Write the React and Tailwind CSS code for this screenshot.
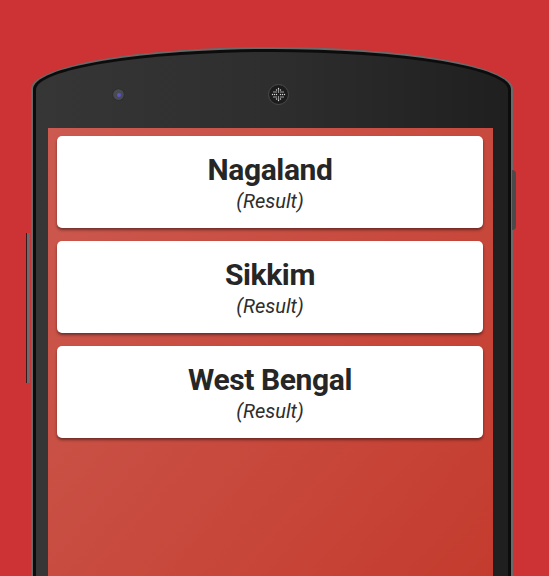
import React from 'react';

const states = ['Nagaland', 'Sikkim', 'West Bengal'];

function ResultCard({ name }) {
  return (
    <div className="h-[92px] bg-white rounded-[5px] shadow-[0_2px_3px_rgba(0,0,0,0.45)] flex flex-col items-center justify-center pt-[3px]">
      <div className="text-[30px] leading-[34px] font-bold tracking-[-0.4px] text-[#262626]">{name}</div>
      <div className="text-[20px] leading-[26px] italic text-[#2e2e2e] mt-[1px]">(Result)</div>
    </div>
  );
}

function App() {
  return (
    <div
      className="relative w-[549px] h-[576px] overflow-hidden bg-[#cd3234]"
      style={{ fontFamily: 'Roboto, "Liberation Sans", sans-serif' }}
    >
      {/* side buttons */}
      <div className="absolute left-[26px] top-[233px] w-[4px] h-[150px] bg-[#6a6a70] border-l border-[#3a1a1a]" />
      <div className="absolute left-[512px] top-[170px] w-[4px] h-[60px] bg-[#4a4a4a] rounded-r-sm" />

      <div className="pt-[47px] pl-[31px]">
        <div className="w-[482px] h-[600px] bg-[#6a6a6a] p-[2px] rounded-t-[241px_42px]">
          <div className="h-full bg-[#0c0c0c] p-[3px] rounded-t-[239px_40px]">
            <div className="h-full flex flex-col bg-gradient-to-r from-[#363636] via-[#2e2e2e] to-[#1f1f1f] rounded-t-[236px_38px] pl-[12px] pr-[15px]">
              <div className="h-[76px] relative shrink-0">
                <div className="absolute left-[65px] top-[37px] w-[11px] h-[11px] rounded-full bg-[#4a4a52] flex items-center justify-center shadow-[0_0_1px_rgba(0,0,0,0.8)]">
                  <div className="w-[4px] h-[4px] rounded-full bg-[#5a55c8]" />
                </div>
                <div className="absolute left-[220px] top-[32px] w-[21px] h-[21px] rounded-full bg-[#1c1c1c] border border-[#4a4a4a] flex items-center justify-center">
                  <svg width="15" height="15" viewBox="0 0 15 15">
                    {[
                      [7.5, 1.5], [5.5, 3], [7.5, 3], [9.5, 3],
                      [3, 5], [5, 5], [7.5, 5], [10, 5], [12, 5],
                      [1.5, 7.5], [3.5, 7.5], [5.5, 7.5], [9.5, 7.5], [11.5, 7.5], [13.5, 7.5],
                      [3, 10], [5, 10], [7.5, 10], [10, 10], [12, 10],
                      [5.5, 12], [7.5, 12], [9.5, 12], [7.5, 13.5],
                    ].map(([cx, cy], i) => (
                      <circle key={i} cx={cx} cy={cy} r="0.7" fill="#d8d8d8" />
                    ))}
                  </svg>
                </div>
              </div>
              <div className="flex-1 bg-gradient-to-br from-[#cc5a50] via-[#c84a3e] to-[#c3392b] pt-[8px] pl-[9px] pr-[10px] flex flex-col gap-[13px]">
                {states.map((s) => (
                  <ResultCard key={s} name={s} />
                ))}
              </div>
            </div>
          </div>
        </div>
      </div>
    </div>
  );
}

export default App;
